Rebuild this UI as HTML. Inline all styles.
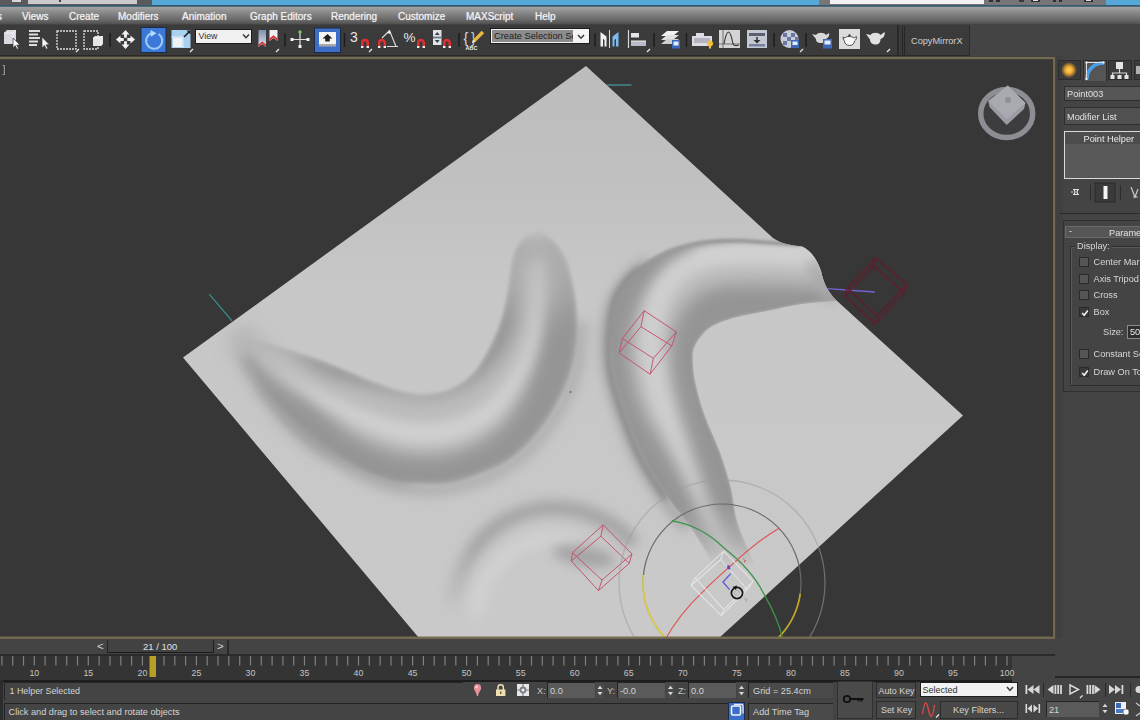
<!DOCTYPE html>
<html>
<head>
<meta charset="utf-8">
<title>3ds Max</title>
<style>
html,body{margin:0;padding:0;}
body{width:1140px;height:720px;overflow:hidden;position:relative;background:#444444;font-family:"Liberation Sans",sans-serif;font-size:10px;color:#d8d8d8;}
.abs{position:absolute;}
/* top strip */
#topstrip{left:0;top:0;width:1140px;height:5px;background:#5c5c5c;}
/* menu */
#menubar{left:0;top:5px;width:1140px;height:20px;background:linear-gradient(to bottom,#2c5a78 0px,#3a5a6c 1.3px,#a2a2a2 2.2px,#9a9a9a 4px,#828282 9px,#6c6c6c 14px,#585858 18px,#4a4a4a 19.3px,#333333 20px);}
#menubar span{position:absolute;top:5.500px;font-size:10px;color:#f0f0f0;white-space:nowrap;text-shadow:0 0 1px #ddd;}
/* toolbar */
#toolbar{left:0;top:25px;width:1140px;height:31px;background:#3b3b3b;}
/* viewport */
#vp{left:0;top:56px;width:1055px;height:583px;background:#383838;}
#vpborder{left:-2px;top:57px;width:1054px;height:579px;border:2px solid #6f5d3a;box-sizing:content-box;}
/* right panel */
#rpanel{left:1056px;top:56px;width:84px;height:600px;background:#444444;}
.rl{font-size:9.2px;line-height:12px;white-space:nowrap;color:#d6d6d6;}
.cbx{width:10px;height:10px;border:1px solid #2a2a2a;box-sizing:border-box;}
#rpanel{overflow:hidden;}
/* bottom */
#bottom{left:0;top:639px;width:1140px;height:81px;background:#444444;}
.bx{position:absolute;box-sizing:border-box;}
.bt{position:absolute;font-size:9.2px;line-height:12px;white-space:nowrap;color:#d4d4d4;}
.fld{position:absolute;box-sizing:border-box;background:#5a5a5a;border-top:1.500px solid #242424;border-left:1.500px solid #242424;}
.btn{position:absolute;box-sizing:border-box;background:#484848;border:1px solid #2c2c2c;}
</style>
</head>
<body>
<div id="topstrip" class="abs">
<div class="abs" style="left:0;top:0;width:152px;height:5px;background:#5a5a5a"></div>
<div class="abs" style="left:12px;top:0;width:9px;height:2px;background:#d8d8d8"></div>
<div class="abs" style="left:28px;top:0;width:109px;height:4px;background:#cbcbcb"></div>
<div class="abs" style="left:152px;top:0;width:667px;height:5px;background:#55a8d8"></div>
<div class="abs" style="left:819px;top:0;width:288px;height:5px;background:#767676"></div>
<div class="abs" style="left:830px;top:0;width:154px;height:4px;background:#f2f2f2"></div>
<div class="abs" style="left:1106px;top:0;width:34px;height:5px;background:#55a8d8"></div>
<div class="abs" style="left:989px;top:0;width:4px;height:2px;background:#303030"></div>
<div class="abs" style="left:996px;top:0;width:4px;height:2px;background:#303030"></div>
<div class="abs" style="left:1019px;top:0;width:5px;height:1.500px;background:#3a3a3a"></div>
<div class="abs" style="left:1031px;top:0;width:9px;height:2px;background:#303030"></div>
<div class="abs" style="left:1033px;top:0;width:5px;height:1px;background:#e0e0e0"></div>
<div class="abs" style="left:1053px;top:0;width:3px;height:2px;background:#303030"></div>
<div class="abs" style="left:1059px;top:0;width:3px;height:2px;background:#303030"></div>
<div class="abs" style="left:1084px;top:0;width:9px;height:2px;background:#303030"></div>
<div class="abs" style="left:1086px;top:0;width:5px;height:1px;background:#e0e0e0"></div>
<div class="abs" style="left:59px;top:0;width:2px;height:1.500px;background:#404040"></div>
<div class="abs" style="left:370px;top:-9px;font-size:11px;color:#243848;white-space:nowrap;line-height:11px">Autodesk 3ds Max 2014 x64 &nbsp;&nbsp;&nbsp; Untitled</div>
</div>
<div id="menubar" class="abs">
<span style="left:-3px">s</span>
<span style="left:22px">Views</span>
<span style="left:69px">Create</span>
<span style="left:118px">Modifiers</span>
<span style="left:182px">Animation</span>
<span style="left:250px">Graph Editors</span>
<span style="left:331px">Rendering</span>
<span style="left:398px">Customize</span>
<span style="left:466px">MAXScript</span>
<span style="left:535px">Help</span>
</div>
<div id="toolbar" class="abs">
<div class="abs" style="left:970px;top:0;width:170px;height:31px;background:#444444"></div>
<div class="abs" style="left:897px;top:0;width:2px;height:31px;background:#2a2a2a"></div>
<div class="abs" style="left:902px;top:1px;width:1px;height:29px;background:#262626"></div>
<div class="abs" style="left:904px;top:1px;width:1px;height:29px;background:#262626"></div>
<div class="abs" style="left:969px;top:0;width:1px;height:31px;background:#2c2c2c"></div>
<div class="abs" style="left:911px;top:10.500px;font-size:9.200px;color:#cfcfcf;white-space:nowrap">CopyMirrorX</div>
<div class="abs" style="left:195px;top:4px;width:57px;height:15px;background:#f0f0f0;border:1px solid #1c1c1c;box-sizing:border-box;color:#303030;font-size:8.800px;line-height:13px;padding-left:2.500px">View</div>
<div class="abs" style="left:490px;top:3px;width:100px;height:16px;background:#f4f4f4;border:1px solid #1c1c1c;box-sizing:border-box"></div>
<div class="abs" style="left:492px;top:5px;width:81px;height:12px;background:#8c8c8c;color:#202020;font-size:9.3px;line-height:12px;white-space:nowrap;overflow:hidden;padding-left:2px;box-sizing:border-box">Create Selection Se</div>
<div class="abs" style="left:0;top:29.500px;width:970px;height:1.500px;background:#2d2922"></div>
<svg class="abs" id="tbsvg" style="left:0;top:0" width="1140" height="31" viewBox="0 25 1140 31">
<path d="M4,33 l3,-3 h9 v11 l-3,3 h-9 z" fill="#d9d9e2"/><path d="M4,33 h9 v11 M13,33 l3,-3" fill="none" stroke="#f4f4f4" stroke-width="1"/><path d="M13,38 v10 l2.2,-2.4 1.8,3.6 1.6,-0.8 -1.8,-3.4 h3.2 z" fill="#f8f8f8" stroke="#3b3b3b" stroke-width="0.7"/>
<g fill="#dcdcdc"><rect x="29" y="30" width="11" height="2"/><rect x="29" y="33.5" width="9" height="2"/><rect x="29" y="37" width="11" height="2"/><rect x="29" y="40.5" width="9" height="2"/><rect x="29" y="44" width="8" height="2"/></g><path d="M42,37 v11 l2.4,-2.6 2,3.8 1.6,-0.8 -2,-3.6 h3.4 z" fill="#f8f8f8" stroke="#3b3b3b" stroke-width="0.7"/>
<rect x="57" y="31" width="19" height="18" fill="none" stroke="#dedede" stroke-width="1.3" stroke-dasharray="2,1"/><path d="M76,52 l3,-3" stroke="#e8e8e8" stroke-width="1.3"/>
<rect x="84" y="31" width="14" height="18" fill="none" stroke="#dedede" stroke-width="1.3" stroke-dasharray="2,1"/><path d="M93,38 l2,-2 h8 v8 l-2,2 h-8 z" fill="#e4e4e4"/><path d="M93,38 h8 v8 M101,38 l2,-2" fill="none" stroke="#fafafa" stroke-width="0.8"/>
<rect x="109.25" y="33" width="1.5" height="14" fill="#1e1e1e"/>
<g fill="#f2f2f2"><path d="M125.5,30 l4,4.5 h-2.6 v3.2 h-2.8 v-3.2 h-2.6 z"/><path d="M125.5,49 l4,-4.5 h-2.6 v-3.2 h-2.8 v3.2 h-2.6 z"/><path d="M116,39.5 l4.5,-4 v2.6 h3.2 v2.8 h-3.2 v2.6 z"/><path d="M135,39.5 l-4.5,-4 v2.6 h-3.2 v2.8 h3.2 v2.6 z"/></g>
<rect x="141" y="27.5" width="25" height="25" fill="#3b78d8" stroke="#1d2a44" stroke-width="1"/><path d="M158.5,34 a8,8 0 1 1 -7,-0.8" fill="none" stroke="#9ccaf4" stroke-width="2"/><path d="M150.5,30 l6,3.2 -5.6,3.6 z" fill="#b8dcff"/>
<rect x="171.500" y="30" width="19" height="18" fill="#a9d2f0"/><rect x="173" y="38" width="9" height="9" fill="#f2f2f2"/><path d="M171.500,37 h11.500 v11" fill="none" stroke="#e8f2fa" stroke-width="1"/><path d="M184,37 l6,-6" stroke="#1c1c1c" stroke-width="1.6"/><path d="M186.500,30.500 h4 v4 z" fill="#1c1c1c"/><path d="M190,52 l3,-3" stroke="#e8e8e8" stroke-width="1.3"/>
<path d="M243,34.500 l3,3.200 3,-3.200" fill="none" stroke="#3a3a3a" stroke-width="1.5"/>
<defs><linearGradient id="pvg" x1="0" y1="0" x2="0" y2="1"><stop offset="0" stop-color="#7d8fae"/><stop offset="1" stop-color="#e4e4ee"/></linearGradient></defs><path d="M258.500,30 h7.500 v17 l-3.750,-3 -3.750,3 z" fill="url(#pvg)"/><path d="M258.500,47 l3.750,-3.400 3.750,3.400 v-2.400 l-3.750,-3.200 -3.750,3.200z" fill="#d83030"/><path d="M269.500,30 h8 v11 l-4,-3 -4,3 z" fill="#f0f0f4"/><path d="M269.500,41 l4,-3.400 4,3.400 v-2.600 l-4,-3.200 -4,3.200z" fill="#d83030"/><path d="M276,52 l3,-3" stroke="#e8e8e8" stroke-width="1.3"/>
<rect x="284.25" y="33" width="1.5" height="14" fill="#1e1e1e"/>
<path d="M292,39.500 h16 M300,32 v15" stroke="#e0e0e0" stroke-width="1.2"/><rect x="290.500" y="38" width="3" height="3" fill="#f4f4f4"/><rect x="306.500" y="38" width="3" height="3" fill="#f4f4f4"/><rect x="298.500" y="45" width="3" height="3" fill="#f4f4f4"/><circle cx="300" cy="32" r="1.700" fill="#86c070"/>
<rect x="314.500" y="28" width="26" height="24.500" fill="#3d6fc6" stroke="#1d2a44" stroke-width="1"/><rect x="319" y="32" width="17" height="14" fill="#f4f4f4"/><rect x="319" y="44" width="17" height="2.500" fill="#a8a8a8"/><path d="M327.500,34 l5,4.600 h-2.700 v3 h-4.600 v-3 h-2.700 z" fill="#202020"/>
<rect x="343.75" y="33" width="1.5" height="14" fill="#1e1e1e"/>
<text x="350" y="41.500" font-family="Liberation Sans, sans-serif" font-size="14" fill="#e8e8e8">3</text><path d="M362.2,47 V42.8 a2.8,2.8 0 0 1 5.6,0 V47" fill="none" stroke="#e03030" stroke-width="2.4"/><rect x="361" y="46" width="2.4" height="2" fill="#f0f0f0"/><rect x="366.6" y="46" width="2.4" height="2" fill="#f0f0f0"/><path d="M369,52 l3,-3" stroke="#e8e8e8" stroke-width="1.3"/>
<path d="M379.2,47 V42.8 a2.8,2.8 0 0 1 5.6,0 V47" fill="none" stroke="#e03030" stroke-width="2.4"/><rect x="378" y="46" width="2.4" height="2" fill="#f0f0f0"/><rect x="383.6" y="46" width="2.4" height="2" fill="#f0f0f0"/><path d="M382,38 L389.500,30.500 L396,46.500 M387,46.500 H398" fill="none" stroke="#dcdcdc" stroke-width="1.2"/><path d="M387,33 l3,-2.500 0.500,3.500z" fill="#f4f4f4"/>
<text x="403.500" y="41.500" font-family="Liberation Sans, sans-serif" font-size="13.500" fill="#e8e8e8">%</text><path d="M418.2,47 V42.8 a2.8,2.8 0 0 1 5.6,0 V47" fill="none" stroke="#e03030" stroke-width="2.4"/><rect x="417" y="46" width="2.4" height="2" fill="#f0f0f0"/><rect x="422.6" y="46" width="2.4" height="2" fill="#f0f0f0"/>
<rect x="433" y="30" width="8.500" height="15" fill="#dfe3ea"/><rect x="433" y="36.600" width="8.500" height="1.800" fill="#6f7684"/><path d="M434.800,35 l2.450,-3 2.450,3z M434.800,40 l2.450,3 2.450,-3z" fill="#3a3f4a"/><path d="M444.2,47 V42.8 a2.8,2.8 0 0 1 5.6,0 V47" fill="none" stroke="#e03030" stroke-width="2.4"/><rect x="443" y="46" width="2.4" height="2" fill="#f0f0f0"/><rect x="448.6" y="46" width="2.4" height="2" fill="#f0f0f0"/>
<rect x="458.25" y="33" width="1.5" height="14" fill="#1e1e1e"/>
<text x="463.500" y="43" font-family="Liberation Sans, sans-serif" font-size="14" fill="#d8d8d8">{</text><text x="471" y="43" font-family="Liberation Sans, sans-serif" font-size="14" fill="#c8c8c8">}</text><path d="M472,43 l1.200,-3.600 8.400,-8.600 2.600,2.400 -8.600,8.600 z" fill="#e8b83c"/><path d="M472,43 l1.200,-3.600 2.400,2.400z" fill="#f4e8c8"/><text x="465.500" y="50" font-family="Liberation Sans, sans-serif" font-size="5.500" font-weight="bold" fill="#f0f0f0">ABC</text>
<path d="M578,35 l3,3.200 3,-3.200" fill="none" stroke="#3a3a3a" stroke-width="1.500"/>
<rect x="594.25" y="33" width="1.5" height="14" fill="#1e1e1e"/>
<path d="M600.500,32 l6,4.500 v10 h-2 v-6.500 l-1.500,-1.200 v7.700 h-2.500z" fill="#f2f2f2"/><path d="M618.500,32 l-6,4.500 v10 h2 v-6.500 l1.500,-1.200 v7.700 h2.500z" fill="#7cbcf0"/><path d="M609.500,30 v18" stroke="#e0e0e0" stroke-width="1"/>
<path d="M628.500,30 v18" stroke="#d8d8d8" stroke-width="1.200"/><rect x="631" y="33" width="8" height="4.500" fill="#e4e4ea"/><rect x="631" y="41" width="15" height="5" fill="#b8bcc8"/><path d="M631,41 h15" stroke="#f0f0f0" stroke-width="1"/><path d="M647,52 l3,-3" stroke="#e8e8e8" stroke-width="1.3"/>
<rect x="653.25" y="33" width="1.5" height="14" fill="#1e1e1e"/>
<path d="M661,36 l6,-5 h12 l-6,5z" fill="#f0f0f0"/><path d="M661,40 l6,-5 h12 l-6,5z" fill="#e0e0e0"/><path d="M661,44 l6,-5 h12 l-6,5z" fill="#d0d0d0"/><rect x="672" y="40" width="8" height="8.500" fill="#3c68b8"/><rect x="673.500" y="41.500" width="5" height="4" fill="#e4ecf8"/>
<rect x="685.75" y="33" width="1.5" height="14" fill="#1e1e1e"/>
<path d="M692,36 h4 v-3 h8 v3 h8 v10 h-20z" fill="#dcdce4"/><rect x="694" y="38" width="16" height="5" fill="#b4b4c0"/><circle cx="710" cy="43.500" r="3" fill="#f0c040"/><rect x="709" y="45" width="2" height="3.500" fill="#f0c040"/>
<rect x="719" y="30" width="21" height="18" fill="#d4d4d4"/><path d="M723,30 v18 M719,44 h21" stroke="#707070" stroke-width="1"/><path d="M724,44 c3,-16 6,-16 9,0 c1,2 3,2 6,1" fill="none" stroke="#404040" stroke-width="1.200"/>
<rect x="747" y="30" width="20" height="18" fill="#c4c8d2"/><rect x="749" y="33" width="16" height="3" fill="#5a6070"/><path d="M757,37 v4" stroke="#303030" stroke-width="1.500"/><path d="M753.500,40 h7 l-3.500,3.500z" fill="#303030"/><rect x="749" y="44" width="16" height="2.500" fill="#7880a0"/>
<rect x="773.25" y="33" width="1.5" height="14" fill="#1e1e1e"/>
<circle cx="789.500" cy="39" r="9" fill="#c8ccd8"/><g fill="#6878a0"><rect x="783" y="33" width="4" height="4"/><rect x="791" y="33" width="4" height="4"/><rect x="787" y="37" width="4" height="4"/><rect x="783" y="41" width="4" height="4"/><rect x="795" y="37" width="3" height="4"/></g><rect x="791" y="40" width="8" height="8" fill="#3c68b8"/><rect x="792.500" y="41.500" width="5" height="3.500" fill="#e4ecf8"/><path d="M800,52 l3,-3" stroke="#e8e8e8" stroke-width="1.3"/>
<rect x="805.25" y="33" width="1.5" height="14" fill="#1e1e1e"/>
<path d="M812,34 l4,1 c2,-3 8,-3 10,0 l3,-2 c1,2 -1,5 -3,6 c0,3 -2,4 -5,4 c-3,0 -5,-1 -5,-4 z" fill="#d8d8d8"/><rect x="823" y="39" width="9" height="9.500" fill="#3c68b8"/><rect x="824.500" y="40.500" width="6" height="4" fill="#e4ecf8"/>
<rect x="839" y="29" width="21" height="20" fill="#dcdcdc"/><path d="M843,37 l2,1 c1,-2 7,-2 9,0 l2.500,-1.500 c0.500,1.500 -0.500,3.500 -2,4.500 c0,3 -2.500,4.500 -5,4.500 c-2.500,0 -5,-1.500 -5,-4.500 c-1,-1 -1.500,-3 -1.500,-4 z" fill="#f8f8f8" stroke="#404040" stroke-width="0.900"/><circle cx="849.500" cy="35.500" r="1.200" fill="#404040"/>
<path d="M866,34 l4.500,1 c2,-3 8,-3 10,0 l4,-3 c1,3 -1,6 -4,7 c0,4 -2,5.500 -5,5.500 c-3,0 -5.500,-1.500 -5.500,-5 z" fill="#e0e0e0"/><path d="M887,52 l3,-3" stroke="#e8e8e8" stroke-width="1.3"/>
</svg>
</div>
<div id="vp" class="abs"></div>
<svg class="abs" id="vpsvg" style="left:0;top:56px" width="1055" height="583" viewBox="0 56 1055 583">
<defs>
<filter id="b3" filterUnits="userSpaceOnUse" x="0" y="0" width="1100" height="700"><feGaussianBlur stdDeviation="3"/></filter>
<filter id="b6" filterUnits="userSpaceOnUse" x="0" y="0" width="1100" height="700"><feGaussianBlur stdDeviation="6"/></filter>
<filter id="b10" filterUnits="userSpaceOnUse" x="0" y="0" width="1100" height="700"><feGaussianBlur stdDeviation="10"/></filter>
<filter id="b16" filterUnits="userSpaceOnUse" x="0" y="0" width="1100" height="700"><feGaussianBlur stdDeviation="16"/></filter>
<linearGradient id="pg" x1="0" y1="66" x2="0" y2="638" gradientUnits="userSpaceOnUse">
<stop offset="0" stop-color="#bcbcbc"/><stop offset="0.2" stop-color="#c0c0c0"/><stop offset="0.38" stop-color="#c7c7c7"/><stop offset="1" stop-color="#c9c9c9"/>
</linearGradient>
<clipPath id="pc"><path d="M586,66 L773,238 C782,244 790,245 802,246.5 C812,251 818,262 821,271 C823,280 826,290 836,300 L963,415.5 L719,638 L419,638 L183,357.5 Z"/></clipPath>
</defs>
<rect x="0" y="56" width="1055" height="583" fill="#373737"/>
<path id="plane" d="M586,66 L773,238 C782,244 790,245 802,246.5 C812,251 818,262 821,271 C823,280 826,290 836,300 L963,415.5 L719,638 L419,638 L183,357.5 Z" fill="url(#pg)"/>
<g clip-path="url(#pc)" id="shade">
<filter id="b2" filterUnits="userSpaceOnUse" x="0" y="0" width="1100" height="700"><feGaussianBlur stdDeviation="1.8"/></filter>
<filter id="b8" filterUnits="userSpaceOnUse" x="0" y="0" width="1100" height="700"><feGaussianBlur stdDeviation="8"/></filter>
<linearGradient id="tfade" x1="0" y1="505" x2="0" y2="566" gradientUnits="userSpaceOnUse"><stop offset="0" stop-color="#fff"/><stop offset="0.6" stop-color="#888"/><stop offset="1" stop-color="#000"/></linearGradient>
<linearGradient id="sfade" x1="0" y1="545" x2="0" y2="605" gradientUnits="userSpaceOnUse"><stop offset="0" stop-color="#fff"/><stop offset="1" stop-color="#222"/></linearGradient>
<mask id="cm" maskUnits="userSpaceOnUse" x="0" y="0" width="1100" height="700"><path d="M237.0,333.0 C242.5,334.7 258.8,339.5 270.0,343.0 C281.2,346.5 293.0,350.2 304.0,354.0 C315.0,357.8 325.5,361.8 336.0,366.0 C346.5,370.2 356.7,375.0 367.0,379.0 C377.3,383.0 388.3,387.5 398.0,390.0 C407.7,392.5 416.3,394.2 425.0,394.0 C433.7,393.8 442.3,392.2 450.0,389.0 C457.7,385.8 464.8,381.2 471.0,375.0 C477.2,368.8 482.3,360.3 487.0,352.0 C491.7,343.7 495.8,334.0 499.0,325.0 C502.2,316.0 504.2,306.8 506.0,298.0 C507.8,289.2 508.7,279.7 510.0,272.0 C511.3,264.3 511.7,257.8 514.0,252.0 C516.3,246.2 520.3,240.5 524.0,237.0 C527.7,233.5 534.0,232.0 536.0,231.0 L540.0,231.0 C542.7,233.0 551.3,237.5 556.0,243.0 C560.7,248.5 564.7,254.5 568.0,264.0 C571.3,273.5 574.5,287.8 576.0,300.0 C577.5,312.2 578.0,324.7 577.0,337.0 C576.0,349.3 573.7,362.3 570.0,374.0 C566.3,385.7 561.0,396.5 555.0,407.0 C549.0,417.5 541.7,428.2 534.0,437.0 C526.3,445.8 518.0,453.8 509.0,460.0 C500.0,466.2 489.8,470.2 480.0,474.0 C470.2,477.8 460.3,481.3 450.0,483.0 C439.7,484.7 428.5,484.7 418.0,484.0 C407.5,483.3 397.5,482.0 387.0,479.0 C376.5,476.0 365.3,471.5 355.0,466.0 C344.7,460.5 334.8,453.2 325.0,446.0 C315.2,438.8 305.0,431.3 296.0,423.0 C287.0,414.7 278.3,405.5 271.0,396.0 C263.7,386.5 257.7,376.2 252.0,366.0 C246.3,355.8 239.5,340.2 237.0,335.0 Z" fill="#fff" filter="url(#b3)"/><circle cx="240" cy="334" r="20" fill="#000" filter="url(#b8)" opacity="0.9"/><ellipse cx="266" cy="358" rx="46" ry="26" transform="rotate(32 266 358)" fill="#000" filter="url(#b16)" opacity="0.8"/><circle cx="534" cy="226" r="14" fill="#000" filter="url(#b8)" opacity="0.85"/><ellipse cx="538" cy="262" rx="40" ry="56" fill="#000" filter="url(#b16)" opacity="0.55"/></mask>
<mask id="tm" maskUnits="userSpaceOnUse" x="0" y="0" width="1100" height="700"><path d="M850.0,243.0 C841.7,243.3 813.7,245.0 800.0,245.0 C786.3,245.0 779.0,243.7 768.0,243.0 C757.0,242.3 745.5,240.9 734.0,241.0 C722.5,241.1 710.7,241.3 699.0,243.5 C687.3,245.7 674.5,249.1 664.0,254.0 C653.5,258.9 643.5,265.2 636.0,273.0 C628.5,280.8 623.2,290.0 619.0,301.0 C614.8,312.0 611.8,326.8 611.0,339.0 C610.2,351.2 611.5,361.3 614.0,374.0 C616.5,386.7 621.0,400.8 626.0,415.0 C631.0,429.2 636.8,445.0 644.0,459.0 C651.2,473.0 661.2,487.5 669.0,499.0 C676.8,510.5 683.5,516.8 691.0,528.0 C698.5,539.2 710.2,559.7 714.0,566.0 L756.0,566.0 C753.0,559.0 742.2,537.0 738.0,524.0 C733.8,511.0 734.0,500.0 731.0,488.0 C728.0,476.0 724.3,464.0 720.0,452.0 C715.7,440.0 709.0,427.2 705.0,416.0 C701.0,404.8 698.0,394.0 696.0,385.0 C694.0,376.0 693.2,368.5 693.0,362.0 C692.8,355.5 692.3,351.6 695.0,346.0 C697.7,340.4 702.5,333.2 709.0,328.5 C715.5,323.8 724.2,320.9 734.0,318.0 C743.8,315.1 756.5,313.3 768.0,311.0 C779.5,308.7 789.3,305.8 803.0,304.0 C816.7,302.2 842.2,300.7 850.0,300.0 Z" fill="url(#tfade)" filter="url(#b2)"/></mask>
<mask id="sm" maskUnits="userSpaceOnUse" x="0" y="0" width="1100" height="700"><rect x="400" y="480" width="300" height="160" fill="url(#sfade)"/></mask>
<!-- crescent outer halo -->
<path d="M259.9,381.6 C265.1,388.4 279.4,410.2 291.2,422.4 C303.0,434.7 316.7,445.5 330.8,455.1 C344.8,464.6 359.6,474.1 375.4,479.8 C391.2,485.5 408.7,489.2 425.3,489.4 C442.0,489.7 459.7,486.5 475.6,481.1 C491.4,475.7 507.3,467.4 520.2,457.0 C533.2,446.5 544.3,432.4 553.5,418.3 C562.6,404.2 570.6,388.3 575.2,372.1 C579.7,356.0 579.8,329.9 580.7,321.4" fill="none" stroke="#b0b0b0" stroke-width="14" filter="url(#b6)"/>
<path d="M244,342 C262,372 290,408 330,438" fill="none" stroke="#aaaaaa" stroke-width="26" stroke-linecap="round" filter="url(#b10)" opacity="0.8"/>
<path d="M250,360 C262,385 285,410 298,424 C315,440 335,450 351,458 C370,468 390,474 404,477" fill="none" stroke="#9a9a9a" stroke-width="15" stroke-linecap="round" filter="url(#b6)" opacity="0.9"/>
<path d="M250,346 C275,372 310,398 350,420" fill="none" stroke="#c4c4c4" stroke-width="12" stroke-linecap="round" filter="url(#b8)" opacity="0.9"/>
<g filter="url(#b2)"><g mask="url(#cm)">
<path d="M237.0,333.0 C242.5,334.7 258.8,339.5 270.0,343.0 C281.2,346.5 293.0,350.2 304.0,354.0 C315.0,357.8 325.5,361.8 336.0,366.0 C346.5,370.2 356.7,375.0 367.0,379.0 C377.3,383.0 388.3,387.5 398.0,390.0 C407.7,392.5 416.3,394.2 425.0,394.0 C433.7,393.8 442.3,392.2 450.0,389.0 C457.7,385.8 464.8,381.2 471.0,375.0 C477.2,368.8 482.3,360.3 487.0,352.0 C491.7,343.7 495.8,334.0 499.0,325.0 C502.2,316.0 504.2,306.8 506.0,298.0 C507.8,289.2 508.7,279.7 510.0,272.0 C511.3,264.3 511.7,257.8 514.0,252.0 C516.3,246.2 520.3,240.5 524.0,237.0 C527.7,233.5 534.0,232.0 536.0,231.0 L540.0,231.0 C542.7,233.0 551.3,237.5 556.0,243.0 C560.7,248.5 564.7,254.5 568.0,264.0 C571.3,273.5 574.5,287.8 576.0,300.0 C577.5,312.2 578.0,324.7 577.0,337.0 C576.0,349.3 573.7,362.3 570.0,374.0 C566.3,385.7 561.0,396.5 555.0,407.0 C549.0,417.5 541.7,428.2 534.0,437.0 C526.3,445.8 518.0,453.8 509.0,460.0 C500.0,466.2 489.8,470.2 480.0,474.0 C470.2,477.8 460.3,481.3 450.0,483.0 C439.7,484.7 428.5,484.7 418.0,484.0 C407.5,483.3 397.5,482.0 387.0,479.0 C376.5,476.0 365.3,471.5 355.0,466.0 C344.7,460.5 334.8,453.2 325.0,446.0 C315.2,438.8 305.0,431.3 296.0,423.0 C287.0,414.7 278.3,405.5 271.0,396.0 C263.7,386.5 257.7,376.2 252.0,366.0 C246.3,355.8 239.5,340.2 237.0,335.0 Z" fill="#959595"/>
<path d="M236.1,334.9 C240.7,339.2 254.0,351.8 263.5,360.5 C273.0,369.2 282.8,378.2 293.0,387.0 C303.2,395.9 313.5,405.0 324.7,413.7 C335.9,422.4 346.8,432.5 360.2,439.3 C373.5,446.2 388.9,452.4 404.6,454.6 C420.4,456.8 438.9,457.0 454.8,452.5 C470.7,448.1 488.2,439.0 500.1,428.0 C512.0,417.1 519.8,400.9 526.4,386.9 C533.0,372.8 536.8,358.1 539.4,343.8 C542.0,329.5 542.0,314.9 541.9,301.0 C541.9,287.2 539.6,267.3 539.1,260.6 L529.1,260.3 C528.3,266.8 526.8,286.7 524.0,299.2 C521.3,311.8 517.9,324.4 512.7,335.5 C507.4,346.5 500.2,357.2 492.6,365.5 C485.0,373.8 475.9,380.4 467.3,385.2 C458.7,389.9 450.0,392.6 440.8,394.2 C431.5,395.8 422.0,395.9 411.7,395.0 C401.4,394.1 390.7,391.3 379.1,388.8 C367.5,386.3 354.6,383.3 342.1,379.9 C329.6,376.5 316.4,372.8 304.3,368.2 C292.2,363.6 280.4,358.3 269.3,352.4 C258.3,346.4 243.2,335.9 237.9,332.6 Z" fill="#bbbbbb" filter="url(#b8)"/>
<path d="M236.8,334.1 C241.4,338.6 254.6,352.3 264.4,360.9 C274.2,369.6 284.6,378.1 295.6,386.1 C306.5,394.2 318.1,402.0 330.0,409.3 C342.0,416.6 354.0,424.5 367.2,430.1 C380.3,435.7 394.7,441.1 409.1,442.7 C423.5,444.4 439.5,444.0 453.6,440.2 C467.7,436.4 482.6,429.2 493.7,420.0 C504.9,410.7 513.4,397.3 520.5,384.8 C527.6,372.3 532.9,358.5 536.5,344.9 C540.1,331.2 541.3,316.8 542.0,302.9 C542.7,289.0 540.8,268.5 540.6,261.7 L536.6,261.7 C536.3,268.4 536.6,288.9 535.0,302.3 C533.4,315.7 531.4,329.4 527.0,341.9 C522.6,354.4 516.2,366.8 508.7,377.3 C501.2,387.8 492.2,397.8 482.1,404.9 C472.1,412.0 460.2,417.1 448.4,419.9 C436.6,422.7 423.8,423.0 411.3,421.9 C398.8,420.7 386.0,417.3 373.4,413.2 C360.9,409.2 348.4,403.5 336.2,397.8 C323.9,392.2 311.5,386.1 300.0,379.4 C288.4,372.8 277.4,365.4 266.9,357.8 C256.5,350.2 242.1,337.7 237.2,333.7 Z" fill="#d0d0d0" filter="url(#b6)"/>
</g></g>
<!-- tube soft halo (vertical part, left) -->
<path d="M650.0,262.0 C647.0,264.3 637.8,269.7 632.0,276.0 C626.2,282.3 619.2,289.5 615.0,300.0 C610.8,310.5 607.8,326.7 607.0,339.0 C606.2,351.3 607.5,361.3 610.0,374.0 C612.5,386.7 617.0,400.8 622.0,415.0 C627.0,429.2 632.8,445.0 640.0,459.0 C647.2,473.0 657.0,487.5 665.0,499.0 C673.0,510.5 684.2,523.2 688.0,528.0" fill="none" stroke="#a8a8a8" stroke-width="14" filter="url(#b6)"/>
<path d="M640.0,268.0 C637.5,270.5 629.3,277.2 625.0,283.0 C620.7,288.8 616.7,293.7 614.0,303.0 C611.3,312.3 609.5,327.2 609.0,339.0 C608.5,350.8 608.7,361.3 611.0,374.0 C613.3,386.7 618.0,400.8 623.0,415.0 C628.0,429.2 633.8,445.0 641.0,459.0 C648.2,473.0 661.8,492.3 666.0,499.0" fill="none" stroke="#848484" stroke-width="6" filter="url(#b3)"/>
<g mask="url(#tm)">
<path d="M850.0,243.0 C841.7,243.3 813.7,245.0 800.0,245.0 C786.3,245.0 779.0,243.7 768.0,243.0 C757.0,242.3 745.5,240.9 734.0,241.0 C722.5,241.1 710.7,241.3 699.0,243.5 C687.3,245.7 674.5,249.1 664.0,254.0 C653.5,258.9 643.5,265.2 636.0,273.0 C628.5,280.8 623.2,290.0 619.0,301.0 C614.8,312.0 611.8,326.8 611.0,339.0 C610.2,351.2 611.5,361.3 614.0,374.0 C616.5,386.7 621.0,400.8 626.0,415.0 C631.0,429.2 636.8,445.0 644.0,459.0 C651.2,473.0 661.2,487.5 669.0,499.0 C676.8,510.5 683.5,516.8 691.0,528.0 C698.5,539.2 710.2,559.7 714.0,566.0 L756.0,566.0 C753.0,559.0 742.2,537.0 738.0,524.0 C733.8,511.0 734.0,500.0 731.0,488.0 C728.0,476.0 724.3,464.0 720.0,452.0 C715.7,440.0 709.0,427.2 705.0,416.0 C701.0,404.8 698.0,394.0 696.0,385.0 C694.0,376.0 693.2,368.5 693.0,362.0 C692.8,355.5 692.3,351.6 695.0,346.0 C697.7,340.4 702.5,333.2 709.0,328.5 C715.5,323.8 724.2,320.9 734.0,318.0 C743.8,315.1 756.5,313.3 768.0,311.0 C779.5,308.7 789.3,305.8 803.0,304.0 C816.7,302.2 842.2,300.7 850.0,300.0 Z" fill="#959595"/>
<path d="M850.0,244.0 C841.7,244.0 813.9,244.2 800.3,244.0 C786.6,243.8 779.6,243.2 768.3,243.0 C757.0,242.8 743.8,242.2 732.6,243.0 C721.4,243.9 710.9,244.9 701.1,247.8 C691.3,250.8 682.5,254.8 674.0,260.8 C665.4,266.8 656.4,274.8 650.0,283.7 C643.5,292.6 638.6,304.0 635.1,314.2 C631.6,324.5 629.3,333.7 629.0,345.3 C628.7,356.9 630.7,371.9 633.3,383.7 C636.0,395.5 640.9,407.1 645.1,416.2 C649.3,425.3 652.8,428.8 658.3,438.1 C663.9,447.5 671.0,458.9 678.4,472.2 C685.7,485.4 693.7,501.7 702.6,517.5 C711.5,533.4 726.9,558.9 731.8,567.1 L736.2,564.9 C732.4,556.1 719.9,529.3 713.4,512.5 C707.0,495.6 702.3,478.3 697.6,463.8 C693.0,449.4 688.8,435.9 685.7,425.9 C682.6,415.9 681.1,412.1 678.9,403.8 C676.7,395.6 674.0,385.8 672.7,376.3 C671.3,366.8 670.6,354.8 671.0,346.7 C671.4,338.6 672.7,334.2 674.9,327.8 C677.1,321.4 680.2,313.7 684.0,308.3 C687.9,302.9 693.2,298.6 698.0,295.2 C702.9,291.9 706.7,289.9 712.9,288.2 C719.1,286.5 726.2,285.5 735.4,285.0 C744.5,284.4 757.0,284.8 767.7,285.0 C778.4,285.2 786.0,285.8 799.7,286.0 C813.5,286.2 841.6,286.0 850.0,286.0 Z" fill="#bbbbbb" filter="url(#b8)"/>
<path d="M850.0,245.0 C841.7,245.0 813.8,245.2 800.1,245.0 C786.5,244.8 779.3,244.2 768.2,244.0 C757.0,243.8 744.3,243.3 733.3,244.0 C722.3,244.8 711.6,245.6 702.0,248.4 C692.3,251.3 683.3,255.3 675.4,261.2 C667.5,267.2 659.9,275.6 654.6,284.3 C649.3,293.0 645.7,303.3 643.3,313.5 C640.9,323.6 639.8,333.7 640.0,345.2 C640.2,356.6 642.1,370.8 644.7,382.1 C647.3,393.4 651.9,404.2 655.5,412.9 C659.1,421.7 661.8,425.2 666.5,434.7 C671.3,444.1 677.3,456.2 683.9,469.7 C690.4,483.3 697.5,499.9 705.7,516.1 C713.9,532.2 728.5,558.1 733.1,566.5 L734.9,565.5 C730.8,556.9 717.4,530.5 710.3,513.9 C703.1,497.4 697.3,480.4 692.1,466.3 C687.0,452.1 682.7,439.2 679.5,429.3 C676.2,419.5 674.9,415.6 672.5,407.1 C670.1,398.5 667.0,388.3 665.3,377.9 C663.5,367.6 662.1,354.7 662.0,344.8 C661.9,334.9 662.8,326.7 664.7,318.5 C666.6,310.3 669.4,302.3 673.4,295.7 C677.4,289.1 682.9,283.1 688.6,278.8 C694.4,274.4 700.4,271.7 708.0,269.6 C715.7,267.4 724.7,266.6 734.7,266.0 C744.7,265.4 757.0,265.8 767.8,266.0 C778.7,266.2 786.2,266.8 799.9,267.0 C813.6,267.2 841.6,267.0 850.0,267.0 Z" fill="#cfcfcf" filter="url(#b6)"/>
<path d="M820,252 L770,252 C745,250 720,252 696,258" fill="none" stroke="#d0d0d0" stroke-width="12" filter="url(#b3)"/>
</g>
<!-- tube crisp top shadow line -->
<path d="M800.0,244.5 C794.7,244.2 779.0,243.2 768.0,242.5 C757.0,241.8 745.5,240.4 734.0,240.5 C722.5,240.6 710.7,240.8 699.0,243.0 C687.3,245.2 674.5,248.6 664.0,253.5 C653.5,258.4 643.7,264.6 636.0,272.5 C628.3,280.4 622.3,289.9 618.0,301.0 C613.7,312.1 611.3,332.7 610.0,339.0" fill="none" stroke="#939393" stroke-width="3.5" filter="url(#b2)"/>
<!-- bump end shadow -->
<path d="M812,262 C818,275 822,288 834,300" fill="none" stroke="#aaaaaa" stroke-width="12" filter="url(#b6)"/>
<!-- small crescent -->
<g mask="url(#sm)">
<path d="M452.0,604.0 C453.0,600.3 455.5,589.0 458.0,582.0 C460.5,575.0 463.7,568.3 467.0,562.0 C470.3,555.7 474.0,549.2 478.0,544.0 C482.0,538.8 486.5,534.8 491.0,531.0 C495.5,527.2 500.3,523.8 505.0,521.0 C509.7,518.2 513.8,516.4 519.0,514.5 C524.2,512.6 530.5,510.6 536.0,509.5 C541.5,508.4 546.5,508.1 552.0,508.0 C557.5,507.9 563.4,508.2 569.0,509.0 C574.6,509.8 580.2,510.8 585.5,512.5 C590.8,514.2 595.9,516.6 601.0,519.0 C606.1,521.4 611.2,523.5 616.0,527.0 C620.8,530.5 627.7,537.8 630.0,540.0" fill="none" stroke="#a4a4a4" stroke-width="15" stroke-linecap="round" filter="url(#b6)"/>
</g>
<path d="M476.0,612.0 C476.8,608.3 478.5,596.7 481.0,590.0 C483.5,583.3 487.0,577.5 491.0,572.0 C495.0,566.5 499.8,561.3 505.0,557.0 C510.2,552.7 516.2,548.8 522.0,546.0 C527.8,543.2 534.0,541.2 540.0,540.0 C546.0,538.8 552.3,538.8 558.0,539.0 C563.7,539.2 571.3,540.7 574.0,541.0" fill="none" stroke="#d2d2d2" stroke-width="13" stroke-linecap="round" filter="url(#b6)"/>
<ellipse cx="584" cy="556" rx="32" ry="10" fill="#a4a4a4" filter="url(#b6)" transform="rotate(10 584 556)"/>
</g>
<g id="overlay">
<filter id="b05" filterUnits="userSpaceOnUse" x="0" y="0" width="1100" height="700"><feGaussianBlur stdDeviation="0.5"/></filter>
<clipPath id="vc"><rect x="0" y="59" width="1053" height="578"/></clipPath>
<g clip-path="url(#vc)" filter="url(#b05)">
<!-- cyan lines -->
<path d="M607,85 L631.500,85" stroke="#4aa0a0" stroke-width="1.200"/>
<path d="M209.200,294.200 L232,320.800" stroke="#3a9090" stroke-width="1.200"/>
<path d="M827.500,288.600 L874.700,292" stroke="#7464d8" stroke-width="1.400"/>
<circle cx="570.500" cy="392" r="0.900" fill="#5060a0"/>
<path d="M876.0,258.0 L906.7,284.4 L877.0,316.0 L847.0,288.0 Z M874.0,266.0 L904.0,293.0 L875.0,324.0 L845.0,296.0 Z M876.0,258.0 L874.0,266.0 M906.7,284.4 L904.0,293.0 M877.0,316.0 L875.0,324.0 M847.0,288.0 L845.0,296.0" fill="none" stroke="#5e1e2c" stroke-width="1.8" opacity="0.85" stroke-linejoin="round"/>
<path d="M644.2,310.6 L676.3,331.9 L671.9,345.8 L640.9,326.7 Z M622.4,338.5 L653.4,358.3 L650.1,374.2 L619.1,353.0 Z M644.2,310.6 L622.4,338.5 M676.3,331.9 L653.4,358.3 M671.9,345.8 L650.1,374.2 M640.9,326.7 L619.1,353.0" fill="none" stroke="#c4506a" stroke-width="0.95" opacity="1" stroke-linejoin="round"/>
<path d="M603.2,524.8 L632.0,554.0 L602.0,580.0 L572.5,552.7 Z M600.9,536.2 L629.2,563.4 L598.5,590.6 L571.3,561.0 Z M603.2,524.8 L600.9,536.2 M632.0,554.0 L629.2,563.4 M602.0,580.0 L598.5,590.6 M572.5,552.7 L571.3,561.0" fill="none" stroke="#c4506a" stroke-width="0.95" opacity="1" stroke-linejoin="round"/>
<!-- viewcube -->
<g filter="url(#b05)"><ellipse cx="1006.700" cy="113.500" rx="26" ry="24" fill="#3e3e40" stroke="#8c8e94" stroke-width="5.500"/>
<path d="M1007.800,85.500 L1025.500,103 L1024,109 L1006.700,125 L989.500,107 L988.300,101 Z" fill="#9a9ca2"/>
<path d="M1007.800,85.500 L1025.500,103 L1006.700,119 L988.300,101 Z" fill="#a8aab0"/>
<circle cx="1008" cy="100" r="3" fill="#8e9096"/></g>
<!-- gizmo -->
<circle cx="722" cy="583" r="103" fill="none" stroke="#9a9a9a" stroke-opacity="0.55" stroke-width="1.300"/>
<circle cx="722" cy="583" r="79" fill="none" stroke="#6a6a6a" stroke-width="1.200"/>
<path d="M643.400,575 A79,79 0 0 0 672,644" fill="none" stroke="#dccc48" stroke-width="1.700"/>
<path d="M800.300,593.700 A79,79 0 0 1 776,640" fill="none" stroke="#c4a428" stroke-width="1.700"/>
<path d="M672,520.800 C692,524 710,534 724,548 C742,562 756,578 763.700,593.700 C772,608 779,622 783,640" fill="none" stroke="#3c9448" stroke-width="1.300"/>
<path d="M779.400,528 C766,536 750,548 736.700,560.400 C724,572 712,582 703,591.700 C690,604 676,620 665,640" fill="none" stroke="#e05050" stroke-width="1.100"/>
<circle cx="673" cy="521" r="1.300" fill="#3c9c48"/>
<path d="M723.7,551.2 L753.2,581.3 L723.7,609.7 L695.3,577.8 Z M720.7,559.5 L747.3,589.5 L721.3,615.6 L691.2,585.5 Z M723.7,551.2 L720.7,559.5 M753.2,581.3 L747.3,589.5 M723.7,609.7 L721.3,615.6 M695.3,577.8 L691.2,585.5" fill="none" stroke="#e8e8e8" stroke-width="1.1" opacity="0.85" stroke-linejoin="round"/>
<path d="M728.500,566 l1.500,3.500 M730.800,573.600 L723,582 L729.600,589.600" fill="none" stroke="#5858d8" stroke-width="1.300"/>
<path d="M727.500,565 l3,1 -1,3.500 -2.500,-1z" fill="#7040c0"/>
<path d="M744,563 l2,-3 M745,561.500 l-1.500,-3" stroke="#d86060" stroke-width="0.900"/>
<circle cx="737" cy="593" r="5.600" fill="none" stroke="#141414" stroke-width="1.700"/>
<circle cx="737" cy="593" r="2.600" fill="none" stroke="#b0b0b0" stroke-width="0.800"/>
<path d="M732.500,587 l4.500,-1.500 -1,4.500z" fill="#141414"/>
<path d="M744,598 l3,3 M747,598.500 l-1,3.500" stroke="#a0a0a0" stroke-width="0.900"/>
</g>
<text x="2.500" y="72.500" font-family="Liberation Sans, sans-serif" font-size="11" fill="#a8a8a8">]</text>
</g>
<rect x="-2" y="58" width="1056.250" height="579.750" fill="none" stroke="#756b50" stroke-width="2.400"/>
<rect x="1050.400" y="59.200" width="1.800" height="577.400" fill="#3f382d"/>
</svg>
<div id="rpanel" class="abs">
<div class="abs" style="left:0;top:0;width:7px;height:583px;background:#404040"></div>
<!-- tabs -->
<div class="abs" style="left:2px;top:4px;width:23px;height:20px;background:#3a3a3a;border:1px solid #2c2c2c;box-sizing:border-box"></div>
<div class="abs" style="left:27px;top:4px;width:24px;height:21px;background:#555555;border:1px solid #2c2c2c;border-bottom:none;box-sizing:border-box"></div>
<div class="abs" style="left:52px;top:4px;width:24px;height:20px;background:#3c3c3c;border:1px solid #2c2c2c;box-sizing:border-box"></div>
<div class="abs" style="left:78px;top:4px;width:10px;height:20px;background:#3c3c3c;border:1px solid #2c2c2c;box-sizing:border-box"></div>
<svg class="abs" style="left:0;top:0" width="84" height="30" viewBox="1056 56 84 30">
<defs><radialGradient id="sun"><stop offset="0" stop-color="#ffd860"/><stop offset="0.45" stop-color="#f0a830"/><stop offset="1" stop-color="#f0a830" stop-opacity="0"/></radialGradient></defs>
<circle cx="1069" cy="70" r="8" fill="url(#sun)"/>
<path d="M1087,79 C1087,70 1094,63 1104,63" fill="none" stroke="#4aa0e8" stroke-width="3.500"/>
<path d="M1086.500,62.500 h17 M1086.500,62.500 v17" fill="none" stroke="#e0e0e0" stroke-width="1"/>
<rect x="1085.500" y="61.500" width="2" height="2" fill="#f0f0f0"/><rect x="1102.500" y="61.500" width="2" height="2" fill="#f0f0f0"/><rect x="1085.500" y="78" width="2" height="2" fill="#f0f0f0"/>
<rect x="1116" y="62" width="7" height="7" fill="#e4e4e8"/><path d="M1119.500,69 v4 M1112.500,76 v-3 h14 v3" fill="none" stroke="#d8d8d8" stroke-width="1.200"/>
<rect x="1110.500" y="75" width="4" height="4" fill="#e4e4e8"/><rect x="1117.500" y="75" width="4" height="4" fill="#e4e4e8"/><rect x="1124.500" y="75" width="4" height="4" fill="#e4e4e8"/>
<rect x="1136" y="66" width="4" height="8" fill="#b0b0b0"/>
</svg>
<!-- name -->
<div class="abs" style="left:8px;top:30px;width:80px;height:15px;background:#565656;border:1px solid #2e2e2e;box-sizing:border-box"></div>
<div class="abs rl" style="left:11px;top:32px;color:#e0e0e0">Point003</div>
<!-- modifier list -->
<div class="abs" style="left:8px;top:51px;width:80px;height:18px;background:#505050;border:1px solid #2e2e2e;box-sizing:border-box"></div>
<div class="abs rl" style="left:11px;top:54.500px;color:#e0e0e0">Modifier List</div>
<!-- stack -->
<div class="abs" style="left:8px;top:75px;width:80px;height:47.500px;background:#595959;border:1.300px solid #dadada;box-sizing:border-box"></div>
<div class="abs" style="left:9.300px;top:76.300px;width:79px;height:12px;background:#4d4d4d"></div>
<div class="abs rl" style="left:27.500px;top:77px;color:#ececec">Point Helper</div>
<!-- stack buttons -->
<svg class="abs" style="left:0;top:124px" width="84" height="26" viewBox="1056 180 84 26">
<path d="M1073,189.500 h6 M1073,194.500 h6 M1074,189.500 c1.500,2 1.500,3 0,5 M1078,189.500 c-1.500,2 -1.500,3 0,5" fill="none" stroke="#e0e0e0" stroke-width="1.200"/><path d="M1071,192 h2" stroke="#e0e0e0" stroke-width="1"/>
<rect x="1090" y="185" width="1" height="15" fill="#2c2c2c"/>
<rect x="1095" y="183" width="20" height="19" fill="#3a3a3a" stroke="#2a2a2a" stroke-width="1"/>
<rect x="1103.500" y="186" width="4" height="13" fill="#f4f4f4"/>
<rect x="1120" y="185" width="1" height="15" fill="#2c2c2c"/>
<path d="M1131,187 l4,10 3,-8 M1133,197 h5" fill="none" stroke="#c8c8c8" stroke-width="1.200"/>
</svg>
<div class="abs" style="left:3px;top:157px;width:85px;height:1px;background:#2a2a2a"></div>
<!-- rollout -->
<div class="abs" style="left:7px;top:164px;width:81px;height:172px;border:1px solid #303030;border-right:none;box-sizing:border-box"></div>
<div class="abs" style="left:9px;top:170px;width:79px;height:12px;background:#565656;border:1px solid #6a6a6a;border-right:none;box-sizing:border-box"></div>
<div class="abs rl" style="left:13px;top:169px;color:#e0e0e0">-</div>
<div class="abs rl" style="left:53px;top:171px;color:#e4e4e4">Parameters</div>
<div class="abs" style="left:14px;top:190px;width:80px;height:140px;border:1px solid #2c2c2c;border-right:none;box-sizing:border-box;box-shadow:inset 1px 1px 0 #5a5a5a"></div>
<div class="abs rl" style="left:19px;top:184px;background:#444444;padding:0 2px;color:#d4d4d4">Display:</div>
<div class="abs cbx" style="left:23px;top:201px;background:#555555"></div><div class="abs rl" style="left:37.500px;top:200px">Center Marker</div>
<div class="abs cbx" style="left:23px;top:217.5px;background:#555555"></div><div class="abs rl" style="left:37.500px;top:216.5px">Axis Tripod</div>
<div class="abs cbx" style="left:23px;top:234px;background:#555555"></div><div class="abs rl" style="left:37.500px;top:233px">Cross</div>
<div class="abs cbx" style="left:23px;top:250.5px;background:#3a3a3a"><svg class="abs" style="left:1px;top:1px" width="8" height="8" viewBox="0 0 8 8"><path d="M1.2,4 L3.2,6.2 L6.8,1.4" fill="none" stroke="#f4f4f4" stroke-width="1.6"/></svg></div><div class="abs rl" style="left:37.500px;top:249.5px">Box</div>
<div class="abs rl" style="left:47px;top:270px">Size:</div>
<div class="abs" style="left:71px;top:269px;width:20px;height:14px;background:#2e2e2e;border:1px solid #8a8a8a;box-sizing:border-box"></div>
<div class="abs rl" style="left:74px;top:270px;color:#e8e8e8">50</div>
<div class="abs cbx" style="left:23px;top:292.5px;background:#555555"></div><div class="abs rl" style="left:37.500px;top:291.5px">Constant Screen Size</div>
<div class="abs cbx" style="left:23px;top:310.5px;background:#3a3a3a"><svg class="abs" style="left:1px;top:1px" width="8" height="8" viewBox="0 0 8 8"><path d="M1.2,4 L3.2,6.2 L6.8,1.4" fill="none" stroke="#f4f4f4" stroke-width="1.6"/></svg></div><div class="abs rl" style="left:37.500px;top:309.5px">Draw On Top</div>
</div>
<div id="bottom" class="abs">
<!-- time slider row -->
<div class="bx" style="left:0;top:0;width:1055px;height:16px;background:#444444"></div>
<div class="bx" style="left:227px;top:0.500px;width:1.500px;height:15px;background:#2a2a2a"></div>
<div class="bx" style="left:107px;top:0.500px;width:107px;height:13.500px;background:#424242;border-left:1.500px solid #262626;border-right:1.500px solid #1e1e1e;border-bottom:1.500px solid #1a1a1a"></div>
<div class="bt" style="left:143px;top:1.500px;color:#e0e0e0;font-size:9.5px">21 / 100</div>
<div class="bt" style="left:97px;top:1px;color:#d0d0d0;font-size:11.500px">&lt;</div>
<div class="bt" style="left:217px;top:1px;color:#d0d0d0;font-size:11.500px">&gt;</div>
<!-- track bar -->
<div class="bx" style="left:0;top:15.500px;width:1012px;height:26.500px;background:#343434"></div>
<div class="bx" style="left:0;top:15px;width:1055px;height:1.500px;background:#2a2a2a"></div>
<div class="bx" style="left:1055px;top:37px;width:85px;height:1.500px;background:#262626"></div>
<div class="bx" style="left:0;top:41px;width:1012px;height:1.500px;background:#1e1e1e"></div>
<svg class="abs" style="left:0;top:16px" width="1020" height="25" viewBox="0 655 1020 25">
<g fill="#808080"><rect x="-42.0" y="656" width="1.200" height="9.500"/><rect x="-31.1" y="656" width="1.200" height="9.500"/><rect x="-20.3" y="656" width="1.200" height="9.500"/><rect x="-9.5" y="656" width="1.200" height="9.500"/><rect x="1.3" y="656" width="1.200" height="9.500"/><rect x="12.1" y="656" width="1.200" height="9.500"/><rect x="22.9" y="656" width="1.200" height="9.500"/><rect x="33.7" y="656" width="1.200" height="9.500"/><rect x="44.5" y="656" width="1.200" height="9.500"/><rect x="55.3" y="656" width="1.200" height="9.500"/><rect x="66.1" y="656" width="1.200" height="9.500"/><rect x="76.9" y="656" width="1.200" height="9.500"/><rect x="87.7" y="656" width="1.200" height="9.500"/><rect x="98.5" y="656" width="1.200" height="9.500"/><rect x="109.4" y="656" width="1.200" height="9.500"/><rect x="120.2" y="656" width="1.200" height="9.500"/><rect x="131.0" y="656" width="1.200" height="9.500"/><rect x="141.8" y="656" width="1.200" height="9.500"/><rect x="163.4" y="656" width="1.200" height="9.500"/><rect x="174.2" y="656" width="1.200" height="9.500"/><rect x="185.0" y="656" width="1.200" height="9.500"/><rect x="195.8" y="656" width="1.200" height="9.500"/><rect x="206.6" y="656" width="1.200" height="9.500"/><rect x="217.4" y="656" width="1.200" height="9.500"/><rect x="228.2" y="656" width="1.200" height="9.500"/><rect x="239.1" y="656" width="1.200" height="9.500"/><rect x="249.9" y="656" width="1.200" height="9.500"/><rect x="260.7" y="656" width="1.200" height="9.500"/><rect x="271.5" y="656" width="1.200" height="9.500"/><rect x="282.3" y="656" width="1.200" height="9.500"/><rect x="293.1" y="656" width="1.200" height="9.500"/><rect x="303.9" y="656" width="1.200" height="9.500"/><rect x="314.7" y="656" width="1.200" height="9.500"/><rect x="325.5" y="656" width="1.200" height="9.500"/><rect x="336.3" y="656" width="1.200" height="9.500"/><rect x="347.1" y="656" width="1.200" height="9.500"/><rect x="357.9" y="656" width="1.200" height="9.500"/><rect x="368.7" y="656" width="1.200" height="9.500"/><rect x="379.6" y="656" width="1.200" height="9.500"/><rect x="390.4" y="656" width="1.200" height="9.500"/><rect x="401.2" y="656" width="1.200" height="9.500"/><rect x="412.0" y="656" width="1.200" height="9.500"/><rect x="422.8" y="656" width="1.200" height="9.500"/><rect x="433.6" y="656" width="1.200" height="9.500"/><rect x="444.4" y="656" width="1.200" height="9.500"/><rect x="455.2" y="656" width="1.200" height="9.500"/><rect x="466.0" y="656" width="1.200" height="9.500"/><rect x="476.8" y="656" width="1.200" height="9.500"/><rect x="487.6" y="656" width="1.200" height="9.500"/><rect x="498.4" y="656" width="1.200" height="9.500"/><rect x="509.3" y="656" width="1.200" height="9.500"/><rect x="520.1" y="656" width="1.200" height="9.500"/><rect x="530.9" y="656" width="1.200" height="9.500"/><rect x="541.7" y="656" width="1.200" height="9.500"/><rect x="552.5" y="656" width="1.200" height="9.500"/><rect x="563.3" y="656" width="1.200" height="9.500"/><rect x="574.1" y="656" width="1.200" height="9.500"/><rect x="584.9" y="656" width="1.200" height="9.500"/><rect x="595.7" y="656" width="1.200" height="9.500"/><rect x="606.5" y="656" width="1.200" height="9.500"/><rect x="617.3" y="656" width="1.200" height="9.500"/><rect x="628.1" y="656" width="1.200" height="9.500"/><rect x="638.9" y="656" width="1.200" height="9.500"/><rect x="649.8" y="656" width="1.200" height="9.500"/><rect x="660.6" y="656" width="1.200" height="9.500"/><rect x="671.4" y="656" width="1.200" height="9.500"/><rect x="682.2" y="656" width="1.200" height="9.500"/><rect x="693.0" y="656" width="1.200" height="9.500"/><rect x="703.8" y="656" width="1.200" height="9.500"/><rect x="714.6" y="656" width="1.200" height="9.500"/><rect x="725.4" y="656" width="1.200" height="9.500"/><rect x="736.2" y="656" width="1.200" height="9.500"/><rect x="747.0" y="656" width="1.200" height="9.500"/><rect x="757.8" y="656" width="1.200" height="9.500"/><rect x="768.6" y="656" width="1.200" height="9.500"/><rect x="779.5" y="656" width="1.200" height="9.500"/><rect x="790.3" y="656" width="1.200" height="9.500"/><rect x="801.1" y="656" width="1.200" height="9.500"/><rect x="811.9" y="656" width="1.200" height="9.500"/><rect x="822.7" y="656" width="1.200" height="9.500"/><rect x="833.5" y="656" width="1.200" height="9.500"/><rect x="844.3" y="656" width="1.200" height="9.500"/><rect x="855.1" y="656" width="1.200" height="9.500"/><rect x="865.9" y="656" width="1.200" height="9.500"/><rect x="876.7" y="656" width="1.200" height="9.500"/><rect x="887.5" y="656" width="1.200" height="9.500"/><rect x="898.3" y="656" width="1.200" height="9.500"/><rect x="909.1" y="656" width="1.200" height="9.500"/><rect x="920.0" y="656" width="1.200" height="9.500"/><rect x="930.8" y="656" width="1.200" height="9.500"/><rect x="941.6" y="656" width="1.200" height="9.500"/><rect x="952.4" y="656" width="1.200" height="9.500"/><rect x="963.2" y="656" width="1.200" height="9.500"/><rect x="974.0" y="656" width="1.200" height="9.500"/><rect x="984.8" y="656" width="1.200" height="9.500"/><rect x="995.6" y="656" width="1.200" height="9.500"/><rect x="1006.4" y="656" width="1.200" height="9.500"/></g>
<g font-family="Liberation Sans, sans-serif" font-size="8.800" fill="#c4c4c4" text-anchor="middle"><text x="34.3" y="676">10</text><text x="88.3" y="676">15</text><text x="142.4" y="676">20</text><text x="196.4" y="676">25</text><text x="250.5" y="676">30</text><text x="304.5" y="676">35</text><text x="358.5" y="676">40</text><text x="412.6" y="676">45</text><text x="466.6" y="676">50</text><text x="520.7" y="676">55</text><text x="574.7" y="676">60</text><text x="628.7" y="676">65</text><text x="682.8" y="676">70</text><text x="736.8" y="676">75</text><text x="790.9" y="676">80</text><text x="844.9" y="676">85</text><text x="898.9" y="676">90</text><text x="953.0" y="676">95</text><text x="1007.0" y="676">100</text></g>
<rect x="149.500" y="656" width="6.500" height="21" fill="#b8a024"/>
</svg>
<!-- status -->
<div class="bx" style="left:0;top:41px;width:3px;height:40px;background:#2c2c2c"></div>
<div class="bx fld" style="left:4px;top:42.500px;width:459px;height:18px;background:#444444"></div>
<div class="bt" style="left:9.500px;top:46px;font-size:8.900px">1 Helper Selected</div>
<div class="bx fld" style="left:4px;top:64px;width:724px;height:18px;background:#444444"></div>
<div class="bt" style="left:8.500px;top:67px">Click and drag to select and rotate objects</div>
<!-- coord -->
<svg class="abs" style="left:466px;top:41px" width="80" height="20" viewBox="466 680 80 20">
<path d="M477.500,684 a3.600,4 0 0 1 3.600,4 c0,2.500 -2.400,3.500 -3,8 h-1.200 c-0.600,-4.500 -3,-5.500 -3,-8 a3.600,4 0 0 1 3.600,-4z" fill="#e89098"/><circle cx="476.500" cy="687" r="1.200" fill="#fad8dc"/>
<path d="M498,690 v-2.500 a2.700,2.700 0 0 1 5.400,0 v2.500" fill="none" stroke="#f0e4b8" stroke-width="1.400"/><rect x="496" y="689.500" width="9.400" height="6.500" fill="#efe0b0"/><rect x="500" y="691.500" width="1.400" height="2.500" fill="#6a5a30"/>
<rect x="517" y="684" width="12" height="12" fill="#e8e8e8"/><circle cx="523" cy="690" r="3.400" fill="#7a8088"/><path d="M517,690 h12 M523,684 v12" stroke="#7a8088" stroke-width="1.200"/><circle cx="523" cy="690" r="1.500" fill="#f4f4f4"/>
</svg>
<div class="bt" style="left:537px;top:45.500px;color:#c0c0c0">X:</div>
<div class="fld" style="left:547px;top:43px;width:48px;height:16px"></div><div class="bt" style="left:550px;top:45.500px">0.0</div>
<div class="bt" style="left:607px;top:45.500px;color:#c0c0c0">Y:</div>
<div class="fld" style="left:617px;top:43px;width:48px;height:16px"></div><div class="bt" style="left:620px;top:45.500px">-0.0</div>
<div class="bt" style="left:678px;top:45.500px;color:#c0c0c0">Z:</div>
<div class="fld" style="left:688px;top:43px;width:48px;height:16px"></div><div class="bt" style="left:691px;top:45.500px">0.0</div>
<svg class="abs" style="left:594px;top:41px" width="160" height="20" viewBox="594 680 160 20">
<g id="spn"><rect x="596" y="683" width="8" height="15" fill="#4a4a4a"/><path d="M597.500,689 l2.500,-3.200 2.500,3.200z M597.500,692 l2.500,3.200 2.500,-3.200z" fill="#d8d8d8"/></g>
<use href="#spn" x="70.500"/><use href="#spn" x="141.500"/>
</svg>
<!-- blue icon -->
<div class="bx" style="left:728px;top:62.500px;width:17px;height:19px;background:#3a6fc8;border:1px solid #1e2c48"></div>
<svg class="abs" style="left:728px;top:62px" width="18" height="20" viewBox="728 701 18 20"><rect x="731.500" y="706" width="9" height="9" rx="1.500" fill="none" stroke="#f4f4f4" stroke-width="1.600"/><path d="M734,704.500 h7.500 a1.500,1.500 0 0 1 1.500,1.500 v7.500" fill="none" stroke="#e0e8f8" stroke-width="1.300"/></svg>
<!-- grid / time tag -->
<div class="fld" style="left:748px;top:43px;width:85px;height:16px;background:#4a4a4a"></div><div class="bt" style="left:753px;top:45.500px">Grid = 25.4cm</div>
<div class="fld" style="left:748px;top:64px;width:85px;height:18px;background:#4a4a4a"></div><div class="bt" style="left:753px;top:67px">Add Time Tag</div>
<!-- key button -->
<div class="btn" style="left:837px;top:41.500px;width:36px;height:38px;background:#4a4a4a;border-color:#303030"></div>
<svg class="abs" style="left:837px;top:41px" width="36" height="38" viewBox="837 680 36 38"><circle cx="847" cy="699" r="3.200" fill="none" stroke="#101010" stroke-width="1.800"/><path d="M850,699 h13.500 M858.500,699 v2.500 M861.500,699 v2.500" stroke="#101010" stroke-width="1.800" fill="none"/></svg>
<div class="btn" style="left:876px;top:43px;width:40px;height:16px"></div><div class="bt" style="left:878.500px;top:45.500px;font-size:8.900px">Auto Key</div>
<div class="btn" style="left:876px;top:62px;width:40px;height:18px"></div><div class="bt" style="left:881px;top:65px;font-size:8.900px">Set Key</div>
<div class="bx" style="left:920px;top:42.500px;width:98px;height:15.500px;background:#f2f2f2;border:1.500px solid #1e1e1e"></div><div class="bt" style="left:922.500px;top:44.500px;color:#303030;font-size:9px">Selected</div>
<svg class="abs" style="left:1004px;top:44px" width="12" height="12" viewBox="0 0 12 12"><path d="M3,4 l3,3.400 3,-3.400" fill="none" stroke="#3a3a3a" stroke-width="1.500"/></svg>
<svg class="abs" style="left:920px;top:62px" width="22" height="20" viewBox="920 701 22 20"><path d="M922.500,714 c2,-14 4,-14 6,-4 c2,9 4,9 6,-5" fill="none" stroke="#e04848" stroke-width="1.300"/><path d="M936,717.500 l3,-3" stroke="#e8e8e8" stroke-width="1.300"/></svg>
<div class="btn" style="left:940px;top:62px;width:78px;height:18px"></div><div class="bt" style="left:953px;top:65px">Key Filters...</div>
<!-- playback -->
<svg class="abs" style="left:1020px;top:41px" width="120" height="40" viewBox="1020 680 120 40">
<g fill="#d8d8d8">
<rect x="1025.500" y="685" width="1.800" height="9"/><path d="M1033.500,685 v9 l-6,-4.500z M1039.500,685 v9 l-6,-4.500z"/>
<path d="M1047.500,689.500 l6,-4.500 v9z"/><rect x="1054.500" y="685" width="1.800" height="9"/><rect x="1057.300" y="685" width="1.800" height="9"/><rect x="1060.100" y="685" width="1.800" height="9"/>
<path d="M1070,685 l8.500,4.500 -8.500,4.500z" fill="none" stroke="#d8d8d8" stroke-width="1.500"/>
<rect x="1086.500" y="685" width="1.800" height="9"/><rect x="1089.300" y="685" width="1.800" height="9"/><rect x="1092.100" y="685" width="1.800" height="9"/><path d="M1094.500,685 l6,4.500 -6,4.500z"/>
<path d="M1109,685 v9 l6,-4.500z M1115,685 v9 l6,-4.500z"/><rect x="1121.500" y="685" width="1.800" height="9"/>
<circle cx="1139" cy="689.500" r="3.500"/>
<rect x="1025.500" y="704" width="1.600" height="9"/><path d="M1032,704.500 v8 l-4.500,-4z M1033.500,704.500 v8 l4.500,-4z"/><rect x="1038.500" y="704" width="1.600" height="9"/>
<path d="M1102.500,707 l2.500,-3.200 2.500,3.200z M1102.500,710 l2.500,3.200 2.500,-3.200z"/>
</g>
<path d="M1080,698 l2.600,-2.600" stroke="#e8e8e8" stroke-width="1.300"/>
<g fill="#2a2a2a"><rect x="1043" y="683" width="1" height="14"/><rect x="1105" y="683" width="1" height="14"/><rect x="1130" y="683" width="1" height="14"/></g>
<rect x="1115" y="702" width="11" height="12" fill="#f0f0f0"/><rect x="1116" y="703" width="5" height="5" fill="#3c68b8"/><rect x="1116" y="709" width="9" height="4" fill="#4a78c8"/><circle cx="1126" cy="712" r="3" fill="#f8f8f8" stroke="#606060" stroke-width="0.600"/>
<path d="M1136,703 l4,3 M1136,716 l4,-3" stroke="#c8c8c8" stroke-width="1.300"/>
</svg>
<div class="fld" style="left:1046px;top:62px;width:53px;height:16px"></div><div class="bt" style="left:1049px;top:64.500px">21</div>
</div>
</body>
</html>
